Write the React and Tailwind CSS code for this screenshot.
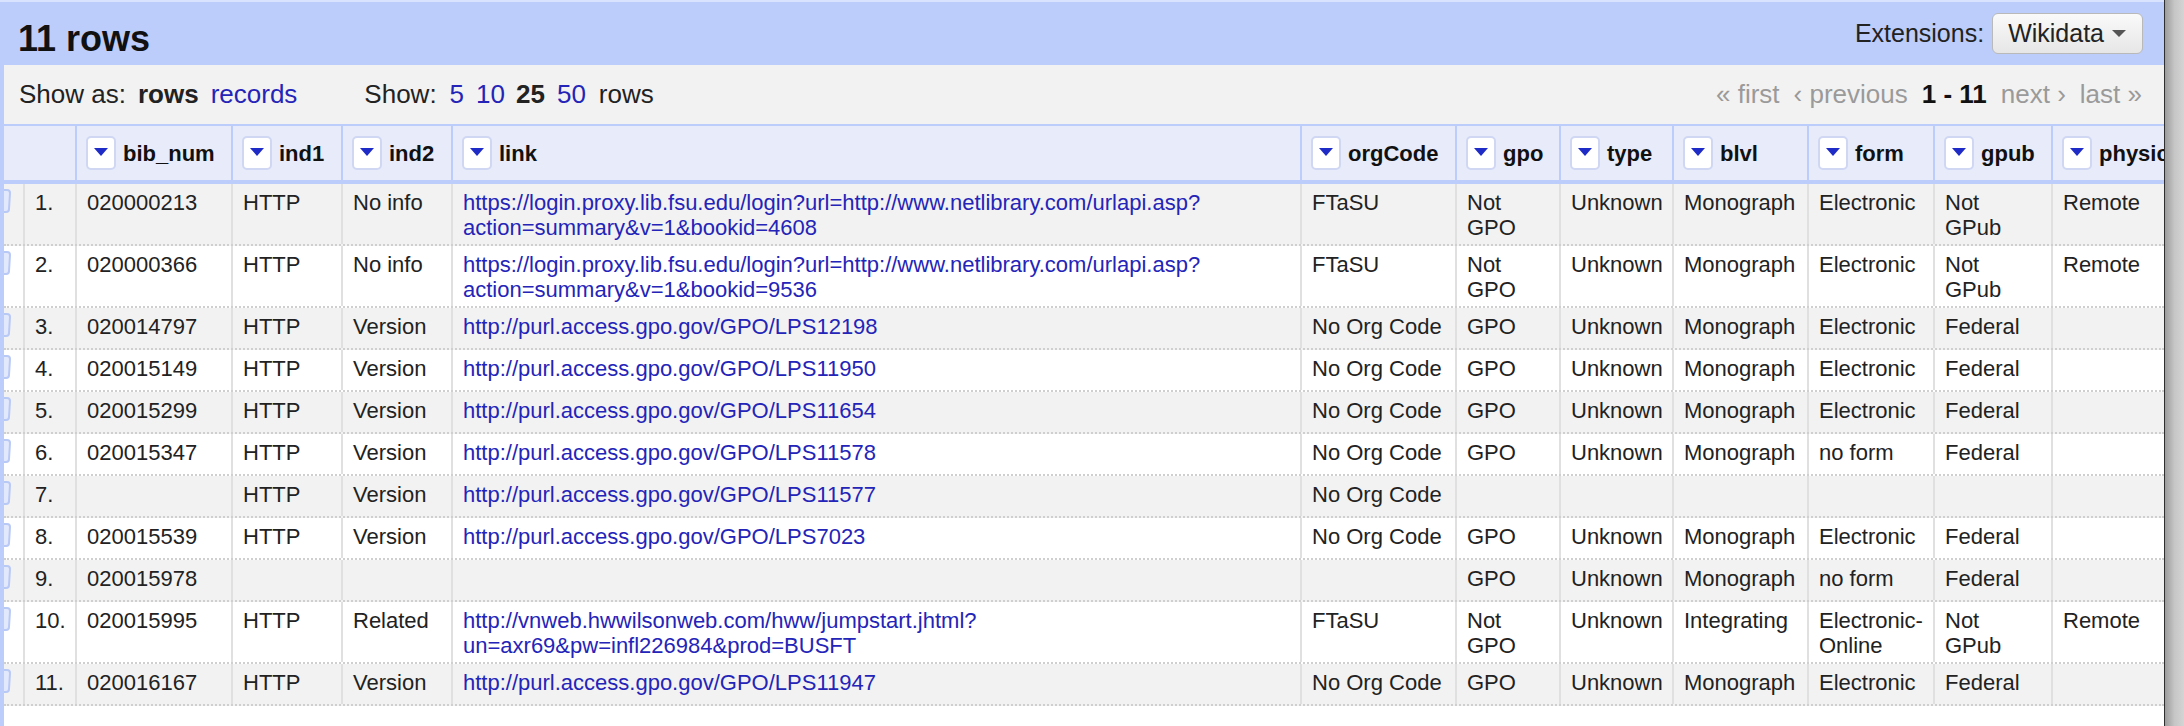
const COLS =
  "grid-cols-[21px_52px_156px_110px_110px_849px_155px_104px_113px_135px_126px_118px_200px]";

const HEADERS = ["bib_num", "ind1", "ind2", "link", "orgCode", "gpo", "type", "blvl", "form", "gpub", "physical"];

const FSU1 = ["https://login.proxy.lib.fsu.edu/login?url=http://www.netlibrary.com/urlapi.asp?", "action=summary&v=1&bookid=4608"];
const FSU2 = ["https://login.proxy.lib.fsu.edu/login?url=http://www.netlibrary.com/urlapi.asp?", "action=summary&v=1&bookid=9536"];
const gpo = (n) => ["http://purl.access.gpo.gov/GPO/" + n];

const ROWS = [
  ["020000213", "HTTP", "No info", FSU1, "FTaSU", ["Not", "GPO"], "Unknown", "Monograph", "Electronic", ["Not", "GPub"], "Remote"],
  ["020000366", "HTTP", "No info", FSU2, "FTaSU", ["Not", "GPO"], "Unknown", "Monograph", "Electronic", ["Not", "GPub"], "Remote"],
  ["020014797", "HTTP", "Version", gpo("LPS12198"), "No Org Code", "GPO", "Unknown", "Monograph", "Electronic", "Federal", ""],
  ["020015149", "HTTP", "Version", gpo("LPS11950"), "No Org Code", "GPO", "Unknown", "Monograph", "Electronic", "Federal", ""],
  ["020015299", "HTTP", "Version", gpo("LPS11654"), "No Org Code", "GPO", "Unknown", "Monograph", "Electronic", "Federal", ""],
  ["020015347", "HTTP", "Version", gpo("LPS11578"), "No Org Code", "GPO", "Unknown", "Monograph", "no form", "Federal", ""],
  ["", "HTTP", "Version", gpo("LPS11577"), "No Org Code", "", "", "", "", "", ""],
  ["020015539", "HTTP", "Version", gpo("LPS7023"), "No Org Code", "GPO", "Unknown", "Monograph", "Electronic", "Federal", ""],
  ["020015978", "", "", "", "", "GPO", "Unknown", "Monograph", "no form", "Federal", ""],
  [
    "020015995", "HTTP", "Related",
    ["http://vnweb.hwwilsonweb.com/hww/jumpstart.jhtml?", "un=axr69&pw=infl226984&prod=BUSFT"],
    "FTaSU", ["Not", "GPO"], "Unknown", "Integrating", ["Electronic-", "Online"], ["Not", "GPub"], "Remote",
  ],
  ["020016167", "HTTP", "Version", gpo("LPS11947"), "No Org Code", "GPO", "Unknown", "Monograph", "Electronic", "Federal", ""],
];

const cell = "pl-[10px] pt-[6px] pb-[4px] border-r-2 border-[#e0e0e0] whitespace-nowrap overflow-hidden leading-[25px]";

function DropBtn() {
  return (
    <div className="w-[30px] h-[34px] shrink-0 bg-white border-2 border-[#cfd7f3] rounded-[5px] flex items-center justify-center">
      <svg width="14" height="8" viewBox="0 0 14 8" className="mb-[3px]">
        <path d="M0 0 H14 L7 8 Z" fill="#1f2bc6" />
      </svg>
    </div>
  );
}

function Flag() {
  return (
    <svg width="8" height="26" viewBox="0 0 8 26" className="mt-[4px]">
      <path d="M0 2 H3 Q6 2 6 5 L5 21 Q5 24 2 24 H0" fill="#e3e9fc" stroke="#b9c9f6" strokeWidth="2" />
    </svg>
  );
}

function Lines({ v, link }) {
  const lines = Array.isArray(v) ? v : [v];
  return lines.map((l, k) => (
    <div key={k} className={link ? "text-[#2424b8]" : ""}>
      {l}
    </div>
  ));
}

function Row({ i, r }) {
  const bg = i % 2 === 0 ? "bg-[#f2f2f2]" : "bg-white";
  return (
    <div className={`grid ${COLS} min-h-[42px] border-b-2 border-dotted border-[#cfcfcf] ${bg}`}>
      <div className="border-r-2 border-[#e0e0e0]">
        <Flag />
      </div>
      <div className={cell}>{i + 1}.</div>
      {r.map((v, k) => (
        <div key={k} className={cell}>
          <Lines v={v} link={k === 3} />
        </div>
      ))}
    </div>
  );
}

export default function App() {
  return (
    <div className="flex w-[2184px] h-[726px] overflow-hidden font-['Liberation_Sans',Arial,sans-serif] text-[#222]">
      <div className="w-[2164px] shrink-0 bg-[#bccdfb] flex flex-col">
        <div className="h-[65px] shrink-0 border-t-2 border-[#dae3fd] flex items-center justify-between pl-[18px] pr-[21px]">
          <h1 className="text-[36px] font-bold text-[#111] mt-[10px]">11 rows</h1>
          <div className="flex items-center">
            <span className="text-[25px] mr-[8px]">Extensions:</span>
            <button className="h-[41px] pl-[15px] pr-[16px] flex items-center gap-[8px] rounded-[6px] border border-[#b9b9b9] bg-linear-to-b from-[#fafafa] to-[#e6e6e6] text-[25px] text-[#222]">
              Wikidata
              <svg width="14" height="7" viewBox="0 0 14 7">
                <path d="M0 0 H14 L7 7 Z" fill="#555" />
              </svg>
            </button>
          </div>
        </div>

        <div className="ml-[4px] flex-1 bg-white flex flex-col overflow-hidden">
          <div className="h-[59px] shrink-0 bg-[#f2f2f2] flex items-center justify-between pl-[15px] pr-[22px] text-[26px]">
            <div className="flex items-center">
              <span>Show as:</span>
              <span className="ml-[12px] font-bold">rows</span>
              <span className="ml-[12px] text-[#2424b8]">records</span>
              <span className="ml-[67px]">Show:</span>
              <span className="ml-[13px] text-[#2424b8]">5</span>
              <span className="ml-[12px] text-[#2424b8]">10</span>
              <span className="ml-[11px] font-bold">25</span>
              <span className="ml-[12px] text-[#2424b8]">50</span>
              <span className="ml-[13px]">rows</span>
            </div>
            <div className="flex items-center gap-[14px] text-[#9a9a9a]">
              <span>« first</span>
              <span>‹ previous</span>
              <span className="font-bold text-[#111]">1 - 11</span>
              <span>next ›</span>
              <span>last »</span>
            </div>
          </div>

          <div className={`grid ${COLS} h-[60px] shrink-0 bg-[#e7ebfa] border-t-2 border-b-4 border-[#bccdfb]`}>
            <div className="col-span-2 border-r-2 border-[#bccdfb]" />
            {HEADERS.map((h) => (
              <div key={h} className="flex items-center pl-[9px] border-r-2 border-[#bccdfb] whitespace-nowrap overflow-hidden">
                <DropBtn />
                <span className="ml-[7px] text-[22px] font-bold text-[#111]">{h}</span>
              </div>
            ))}
          </div>

          <div className="text-[22px]">
            {ROWS.map((r, i) => (
              <Row key={i} i={i} r={r} />
            ))}
          </div>
        </div>
      </div>
      <div className="flex-1 border-l border-[#2e2e2e] bg-linear-to-r from-[#9c9c9c] via-[#c6c6c6] to-[#d4d4d4]" />
    </div>
  );
}
